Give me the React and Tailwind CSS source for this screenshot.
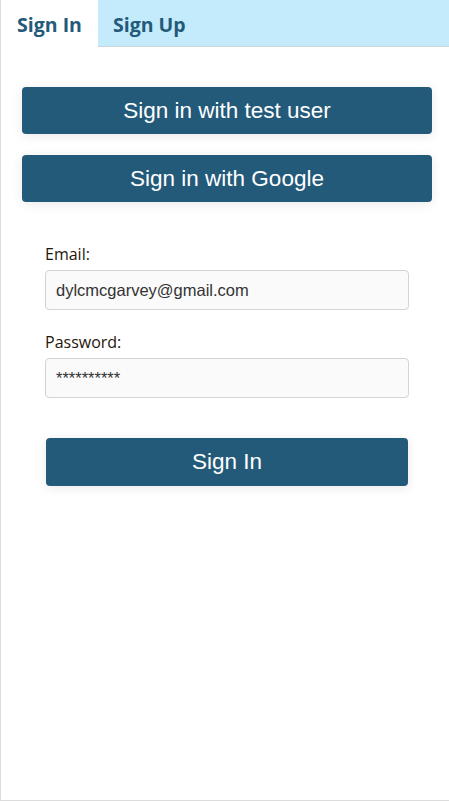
const SignInPanel = () => {
  return (
    <div className="h-[801px] w-[449px] overflow-hidden">
      <div className="flex h-[801px] w-[453px] flex-col border-b border-l border-[#dcdcdc] bg-white">
        <div className="flex h-[47px] shrink-0">
          <div className="flex w-[97px] items-center justify-center bg-white pt-[3px] font-['Open_Sans',sans-serif] text-[19.5px] font-bold text-[#235a7a]">
            Sign In
          </div>
          <div className="flex flex-1 items-center border-b border-[#cfd6da] bg-[#c3ebfc] pt-[4px] pl-[15px] font-['Open_Sans',sans-serif] text-[19.5px] font-bold text-[#235a7a]">
            Sign Up
          </div>
        </div>

        <div className="flex flex-col gap-[21px] px-[21px] pt-[40px]">
          <PrimaryButton label="Sign in with test user" />
          <PrimaryButton label="Sign in with Google" />
        </div>

        <form className="mt-[41px] flex flex-col px-[44px]">
          <FormInput label="Email:" value="dylcmcgarvey@gmail.com" />
          <div className="h-[21px]" />
          <FormInput label="Password:" value="**********" />
          <button
            type="button"
            className="mx-[1px] mt-[40px] h-[48px] rounded-[4px] bg-[#235a7a] font-['Liberation_Sans',Arial,sans-serif] text-[22.5px] text-white shadow-[0_2px_12px_rgba(0,0,0,0.09)]"
          >
            Sign In
          </button>
        </form>
      </div>
    </div>
  );
};

const PrimaryButton = ({ label }) => {
  return (
    <button
      type="button"
      className="h-[47px] w-full rounded-[4px] bg-[#235a7a] font-['Liberation_Sans',Arial,sans-serif] text-[22.5px] text-white shadow-[0_2px_12px_rgba(0,0,0,0.09)]"
    >
      {label}
    </button>
  );
};

const FormInput = ({ label, value }) => {
  return (
    <div className="flex flex-col">
      <label className="font-['Open_Sans',sans-serif] text-[16px] leading-[22px] text-[#1f1608]">
        {label}
      </label>
      <input
        readOnly
        value={value}
        className="mt-[5px] h-[40px] w-full rounded-[4px] border border-[#d4d4d4] bg-[#fafafa] px-[10px] font-['Liberation_Sans',Arial,sans-serif] text-[16.5px] text-[#333] outline-none"
      />
    </div>
  );
};

export default function App() {
  return <SignInPanel />;
}
